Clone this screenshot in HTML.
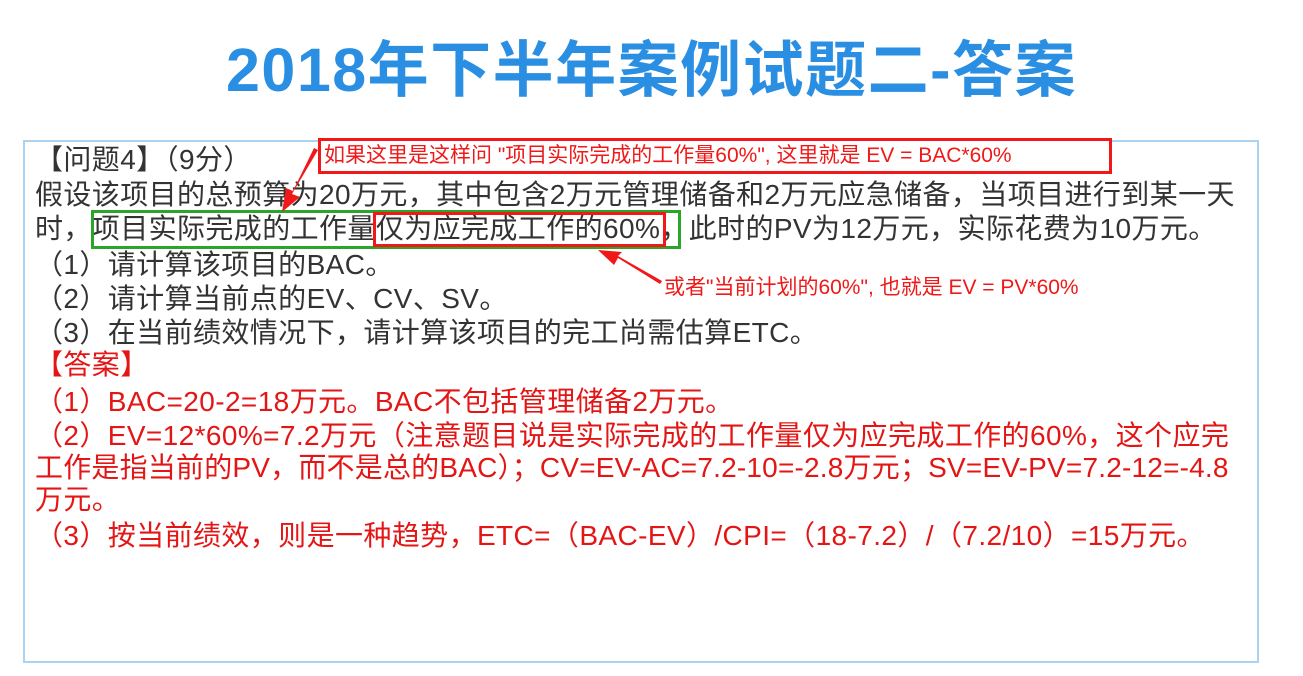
<!DOCTYPE html>
<html><head><meta charset="utf-8"><style>
body{margin:0;width:1303px;height:676px;background:#fff;position:relative;overflow:hidden;font-family:"Liberation Sans","Noto Sans CJK SC",sans-serif;}
.t{position:absolute;left:0;width:1303px;top:30px;text-align:center;font-size:61px;font-weight:bold;color:#2a8fe2;line-height:80px;letter-spacing:1.5px;}
.box{position:absolute;left:23px;top:140px;width:1232px;height:519px;border:2px solid #a9d3f1;}
.l{position:absolute;left:35px;white-space:nowrap;font-size:28px;line-height:34px;color:#333;letter-spacing:0.4px;}
.r{color:#e41515;}
.rb{position:absolute;border:3px solid #f01818;}
.gb{position:absolute;border:3px solid #2aa52a;}
.a{position:absolute;color:#f01818;font-size:21px;white-space:nowrap;line-height:24px;}
</style></head><body>
<div class="t">2018年下半年案例试题二-答案</div>
<div class="box"></div>
<div class="l" style="top:143px">【问题4】（9分）</div>
<div class="l" style="top:178px">假设该项目的总预算为20万元，其中包含2万元管理储备和2万元应急储备，当项目进行到某一天</div>
<div class="l" style="top:212px">时，项目实际完成的工作量仅为应完成工作的60%，此时的PV为12万元，实际花费为10万元。</div>
<div class="l" style="top:248px">（1）请计算该项目的BAC。</div>
<div class="l" style="top:282px">（2）请计算当前点的EV、CV、SV。</div>
<div class="l" style="top:316px">（3）在当前绩效情况下，请计算该项目的完工尚需估算ETC。</div>
<div class="l r" style="top:348px">【答案】</div>
<div class="l r" style="top:385px">（1）BAC=20-2=18万元。BAC不包括管理储备2万元。</div>
<div class="l r" style="top:419px">（2）EV=12*60%=7.2万元（注意题目说是实际完成的工作量仅为应完成工作的60%，这个应完</div>
<div class="l r" style="top:451px;letter-spacing:0.2px">工作是指当前的PV，而不是总的BAC）；CV=EV-AC=7.2-10=-2.8万元；SV=EV-PV=7.2-12=-4.8</div>
<div class="l r" style="top:483px">万元。</div>
<div class="l r" style="top:519px">（3）按当前绩效，则是一种趋势，ETC=（BAC-EV）/CPI=（18-7.2）/（7.2/10）=15万元。</div>
<div class="gb" style="left:91px;top:210px;width:584px;height:33px"></div>
<div class="rb" style="left:373px;top:212px;width:287px;height:29px"></div>
<div class="rb" style="left:318px;top:138px;width:788px;height:30px;background:#fff"></div>
<div class="a" style="left:324px;top:144px">如果这里是这样问 "项目实际完成的工作量60%", 这里就是 EV = BAC*60%</div>
<div class="a" style="left:664px;top:276px">或者"当前计划的60%", 也就是 EV = PV*60%</div>
<svg style="position:absolute;left:0;top:0" width="1303" height="676">
<polygon points="318,150 292,194 300,197 282,212 286,188 293,191 314,148" fill="#f01818"/>
<polygon points="660,284 618,258 614,265 598,250 622,252 618,256 662,281" fill="#f01818"/>
</svg>
</body></html>
